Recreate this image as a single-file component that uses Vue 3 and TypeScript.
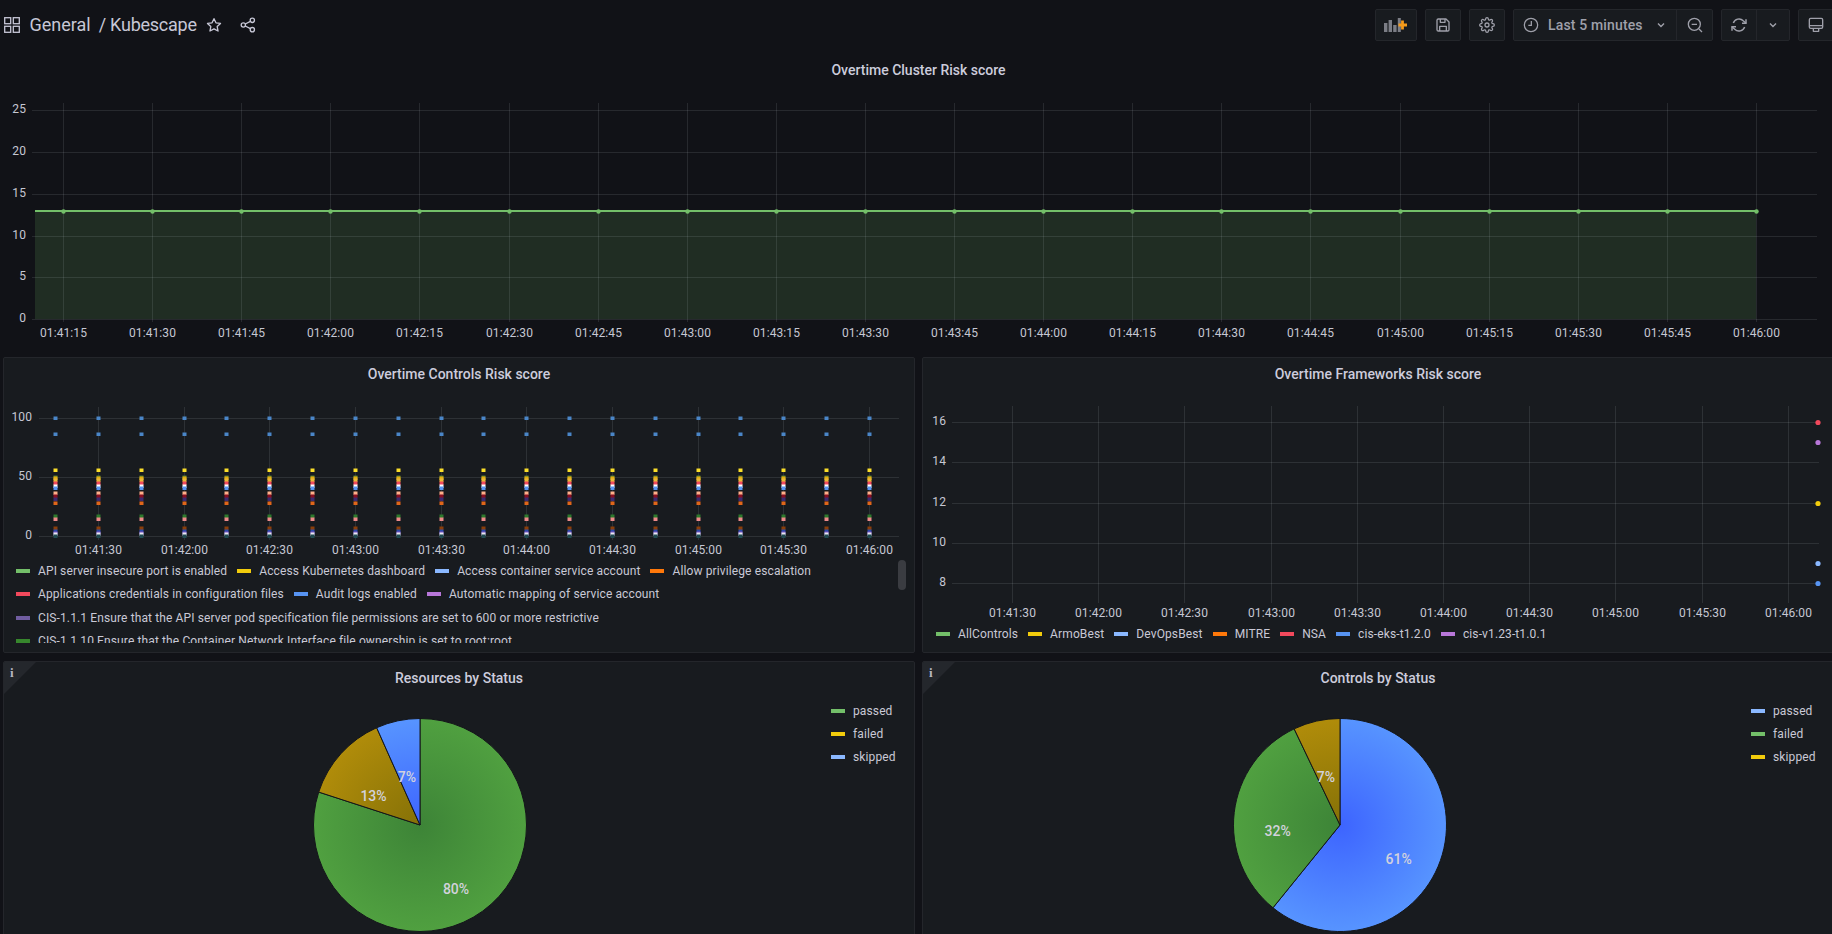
<script setup lang="ts">
interface Swatch { label: string; color: string }
interface Slice { color: string; inner: string; outer: string; from: number; to: number; id: string }

const range = (start: number, step: number, count: number): number[] =>
  Array.from({ length: count }, (_, i) => Math.round(start + step * i) + 0.5)

const clock = (startMin: number, startSec: number, stepSec: number, count: number): string[] =>
  Array.from({ length: count }, (_, i) => {
    const total = startMin * 60 + startSec + stepSec * i
    const m = String(Math.floor(total / 60)).padStart(2, '0')
    const s = String(total % 60).padStart(2, '0')
    return `01:${m}:${s}`
  })

const topX = range(63, 89.1, 20)
const topLabels = clock(41, 15, 15, 20)
const topY = [
  { v: '25', y: 110 }, { v: '20', y: 152 }, { v: '15', y: 194 },
  { v: '10', y: 236 }, { v: '5', y: 277 }, { v: '0', y: 319 }
]

const ctlColumns = range(55, 42.84, 20)
const ctlGridX = ctlColumns.filter((_, i) => i % 2 === 1)
const ctlLabels = clock(41, 30, 30, 10)
const ctlY = [{ v: '100', y: 418 }, { v: '50', y: 477 }, { v: '0', y: 536 }]
const ctlPoints = [
  { y: 418, c: '#4a86c8' }, { y: 434, c: '#4a86c8' }, { y: 470, c: '#fade2a' },
  { y: 477, c: '#4b7a34' }, { y: 478, c: '#e5ac0e' }, { y: 480, c: '#eab839' },
  { y: 483, c: '#f2495c' }, { y: 486, c: '#ffffff' }, { y: 488, c: '#5794f2' },
  { y: 493, c: '#ffb08a' }, { y: 496, c: '#890f22' }, { y: 499, c: '#3b2a70' },
  { y: 503, c: '#e0661a' }, { y: 516, c: '#2d7a2d' }, { y: 519, c: '#ee8a8a' },
  { y: 528, c: '#8a3f0a' }, { y: 531, c: '#2a4aa8' }, { y: 533, c: '#7a4fc0' },
  { y: 534, c: '#e8e8f0' }, { y: 536, c: '#1f4a50' }
]
const ctlLegend: Swatch[] = [
  { label: 'API server insecure port is enabled', color: '#73bf69' },
  { label: 'Access Kubernetes dashboard', color: '#f2cc0c' },
  { label: 'Access container service account', color: '#8ab8ff' },
  { label: 'Allow privilege escalation', color: '#ff780a' },
  { label: 'Applications credentials in configuration files', color: '#f2495c' },
  { label: 'Audit logs enabled', color: '#5794f2' },
  { label: 'Automatic mapping of service account', color: '#b877d9' },
  { label: 'CIS-1.1.1 Ensure that the API server pod specification file permissions are set to 600 or more restrictive', color: '#705da0' },
  { label: 'CIS-1.1.10 Ensure that the Container Network Interface file ownership is set to root:root', color: '#37872d' }
]

const fwX = range(1012, 86.2, 10)
const fwLabels = clock(41, 30, 30, 10)
const fwY = [
  { v: '16', y: 422 }, { v: '14', y: 462 }, { v: '12', y: 503 },
  { v: '10', y: 543 }, { v: '8', y: 583 }
]
const fwPoints = [
  { y: 422, c: '#f2495c' }, { y: 442, c: '#b877d9' }, { y: 503, c: '#f2cc0c' },
  { y: 563, c: '#8ab8ff' }, { y: 583, c: '#5794f2' }
]
const fwLegend: Swatch[] = [
  { label: 'AllControls', color: '#73bf69' },
  { label: 'ArmoBest', color: '#f2cc0c' },
  { label: 'DevOpsBest', color: '#8ab8ff' },
  { label: 'MITRE', color: '#ff780a' },
  { label: 'NSA', color: '#f2495c' },
  { label: 'cis-eks-t1.2.0', color: '#5794f2' },
  { label: 'cis-v1.23-t1.0.1', color: '#b877d9' }
]

const GREEN = { color: '#73bf69', inner: '#3d8437', outer: '#50a040' }
const GOLD = { color: '#f2cc0c', inner: '#857107', outer: '#b08c0a' }
const BLUE = { color: '#8ab8ff', inner: '#3d64ff', outer: '#5794ff' }

const R = 106.5
const sector = (cx: number, cy: number, from: number, to: number): string => {
  const pt = (deg: number): string => {
    const a = (deg * Math.PI) / 180
    return `${(cx + R * Math.sin(a)).toFixed(2)} ${(cy - R * Math.cos(a)).toFixed(2)}`
  }
  const large = to - from > 180 ? 1 : 0
  return `M${cx} ${cy}L${pt(from)}A${R} ${R} 0 ${large} 1 ${pt(to)}Z`
}

const resSlices: Slice[] = [
  { ...GREEN, from: 0, to: 288, id: 'res-a' },
  { ...GOLD, from: 288, to: 336, id: 'res-b' },
  { ...BLUE, from: 336, to: 360, id: 'res-c' }
]
const ctlSlices: Slice[] = [
  { ...BLUE, from: 0, to: 219, id: 'ctl-a' },
  { ...GREEN, from: 219, to: 334.5, id: 'ctl-b' },
  { ...GOLD, from: 334.5, to: 360, id: 'ctl-c' }
]
const resLabels = [
  { t: '80%', x: 456, y: 889 }, { t: '13%', x: 373.5, y: 796 }, { t: '7%', x: 407, y: 777 }
]
const ctlPieLabels = [
  { t: '61%', x: 1398.7, y: 859 }, { t: '32%', x: 1277.7, y: 831 }, { t: '7%', x: 1326, y: 777 }
]
const resLegend: Swatch[] = [
  { label: 'passed', color: '#73bf69' },
  { label: 'failed', color: '#f2cc0c' },
  { label: 'skipped', color: '#8ab8ff' }
]
const ctlPieLegend: Swatch[] = [
  { label: 'passed', color: '#8ab8ff' },
  { label: 'failed', color: '#73bf69' },
  { label: 'skipped', color: '#f2cc0c' }
]
</script>

<template>
  <div class="page">
    <header class="bar">
      <div class="crumbs">
        <svg class="apps" width="16" height="16" viewBox="0 0 16 16" fill="none" stroke="currentColor" stroke-width="1.3">
          <rect x="0.7" y="0.7" width="6" height="6" />
          <rect x="9.3" y="0.7" width="6" height="6" />
          <rect x="0.7" y="9.3" width="6" height="6" />
          <rect x="9.3" y="9.3" width="6" height="6" />
        </svg>
        <span class="crumb">General</span>
        <span class="crumb crumb-last">/ Kubescape</span>
        <svg class="star" width="16" height="16" viewBox="0 0 24 24" fill="none" stroke="currentColor" stroke-width="2" stroke-linejoin="round">
          <path d="M12 2.5l2.95 6.2 6.8.9-4.95 4.7 1.25 6.75L12 17.75 5.95 21.05 7.2 14.3 2.25 9.6l6.8-.9z" />
        </svg>
        <svg class="share" width="16" height="16" viewBox="0 0 24 24" fill="none" stroke="currentColor" stroke-width="2">
          <circle cx="18.5" cy="5" r="3.2" />
          <circle cx="5" cy="12" r="3.2" />
          <circle cx="18.5" cy="19" r="3.2" />
          <path d="M7.9 10.5l7.7-4M7.9 13.5l7.7 4" />
        </svg>
      </div>
      <div class="tools">
        <button class="btn btn-add">
          <svg width="26" height="16" viewBox="0 0 26 16">
            <g fill="#7b7d85">
              <rect x="1" y="6" width="3.4" height="9" />
              <rect x="5.6" y="3" width="3.4" height="12" />
              <rect x="10.2" y="8" width="3.4" height="7" />
              <rect x="14.8" y="1" width="3" height="14" />
            </g>
            <path d="M19.5 3.5v9M15.5 8h8.5" stroke="#f59b1b" stroke-width="2.8" fill="none" />
          </svg>
        </button>
        <button class="btn">
          <svg width="16" height="16" viewBox="0 0 24 24" fill="none" stroke="currentColor" stroke-width="2" stroke-linejoin="round">
            <path d="M5 3h11.5L21 7.5V19a2 2 0 0 1-2 2H5a2 2 0 0 1-2-2V5a2 2 0 0 1 2-2z" />
            <path d="M7 21v-7h10v7M8 3v5h7V3" />
          </svg>
        </button>
        <button class="btn">
          <svg width="16" height="16" viewBox="0 0 24 24" fill="none" stroke="currentColor" stroke-width="1.9">
            <circle cx="12" cy="12" r="3" />
            <path d="M19.4 15a1.65 1.65 0 0 0 .33 1.82l.06.06a2 2 0 0 1 0 2.83 2 2 0 0 1-2.83 0l-.06-.06a1.65 1.65 0 0 0-1.82-.33 1.65 1.65 0 0 0-1 1.51V21a2 2 0 0 1-2 2 2 2 0 0 1-2-2v-.09A1.65 1.65 0 0 0 9 19.4a1.65 1.65 0 0 0-1.82.33l-.06.06a2 2 0 0 1-2.83 0 2 2 0 0 1 0-2.83l.06-.06a1.65 1.65 0 0 0 .33-1.82 1.65 1.65 0 0 0-1.51-1H3a2 2 0 0 1-2-2 2 2 0 0 1 2-2h.09A1.65 1.65 0 0 0 4.6 9a1.65 1.65 0 0 0-.33-1.82l-.06-.06a2 2 0 0 1 0-2.83 2 2 0 0 1 2.83 0l.06.06a1.65 1.65 0 0 0 1.82.33H9a1.65 1.65 0 0 0 1-1.51V3a2 2 0 0 1 2-2 2 2 0 0 1 2 2v.09a1.65 1.65 0 0 0 1 1.51 1.65 1.65 0 0 0 1.82-.33l.06-.06a2 2 0 0 1 2.83 0 2 2 0 0 1 0 2.83l-.06.06a1.65 1.65 0 0 0-.33 1.82V9a1.65 1.65 0 0 0 1.51 1H21a2 2 0 0 1 2 2 2 2 0 0 1-2 2h-.09a1.65 1.65 0 0 0-1.51 1z" />
          </svg>
        </button>
        <div class="group">
          <button class="seg seg-time">
            <svg width="16" height="16" viewBox="0 0 24 24" fill="none" stroke="currentColor" stroke-width="1.9">
              <circle cx="12" cy="12" r="10" />
              <path d="M12.5 6v6.5H8" />
            </svg>
            <span class="time-text">Last 5 minutes</span>
            <svg class="chev" width="12" height="12" viewBox="0 0 12 12" fill="none" stroke="currentColor" stroke-width="1.4">
              <path d="M3 4.5L6 7.5L9 4.5" />
            </svg>
          </button>
          <button class="seg seg-zoom">
            <svg width="16" height="16" viewBox="0 0 24 24" fill="none" stroke="currentColor" stroke-width="2">
              <circle cx="11" cy="11" r="9" />
              <path d="M7 11h8M18 18l4.5 4.5" />
            </svg>
          </button>
        </div>
        <div class="group">
          <button class="seg seg-zoom">
            <svg width="16" height="16" viewBox="0 0 24 24" fill="none" stroke="currentColor" stroke-width="2.2">
              <path d="M22.5 3.5v6h-6M1.5 20.5v-6h6" />
              <path d="M3.51 9a9 9 0 0 1 14.85-3.36L22.5 9.5M1.5 14.5l4.14 3.86A9 9 0 0 0 20.49 15" />
            </svg>
          </button>
          <button class="seg seg-more">
            <svg width="12" height="12" viewBox="0 0 12 12" fill="none" stroke="currentColor" stroke-width="1.4">
              <path d="M3 4.5L6 7.5L9 4.5" />
            </svg>
          </button>
        </div>
        <button class="btn">
          <svg width="16" height="16" viewBox="0 0 24 24" fill="none" stroke="currentColor" stroke-width="2" stroke-linejoin="round">
            <rect x="2" y="2" width="20" height="15" rx="2" />
            <path d="M2 13h20M8 17v4.5h8V17" />
          </svg>
        </button>
      </div>
    </header>

    <main class="dash">
      <section class="panel panel-clear">
        <h2 class="title">Overtime Cluster Risk score</h2>
        <svg class="chart" width="1829" height="261" viewBox="4 87 1829 261">
          <rect x="35" y="211" width="1721" height="108" fill="#73bf69" opacity="0.155" />
          <line v-for="t in topY" :key="t.v" x1="32" :x2="1817" :y1="t.y + 0.5" :y2="t.y + 0.5" class="grid" />
          <line v-for="x in topX" :key="x" :x1="x" :x2="x" y1="103" y2="322" class="grid" />
          <text v-for="t in topY" :key="t.v" x="26" :y="t.y - 1" class="tick" text-anchor="end">{{ t.v }}</text>
          <text v-for="(l, i) in topLabels" :key="l" :x="topX[i]" y="333" class="tick" text-anchor="middle">{{ l }}</text>
          <line x1="35" x2="1756" y1="211" y2="211" stroke="#73bf69" stroke-width="2.2" />
          <circle v-for="x in topX" :key="x" :cx="x" cy="211.5" r="2.2" fill="#73bf69" />
        </svg>
      </section>

      <div class="pair">
        <section class="panel">
          <h2 class="title">Overtime Controls Risk score</h2>
          <svg class="chart" width="910" height="168" viewBox="4 391 910 168">
            <line v-for="t in ctlY" :key="t.v" x1="39" x2="899" :y1="t.y + 0.5" :y2="t.y + 0.5" class="grid" />
            <line v-for="x in ctlGridX" :key="x" :x1="x" :x2="x" y1="407" y2="540" class="grid" />
            <text v-for="t in ctlY" :key="t.v" x="32" :y="t.y - 1" class="tick" text-anchor="end">{{ t.v }}</text>
            <text v-for="(l, i) in ctlLabels" :key="l" :x="ctlGridX[i]" y="550" class="tick" text-anchor="middle">{{ l }}</text>
            <g v-for="x in ctlColumns" :key="x">
              <rect v-for="p in ctlPoints" :key="p.y + p.c" :x="x - 2" :y="p.y - 1.5" width="4" height="3.5" :fill="p.c" />
            </g>
          </svg>
          <div class="legend-scroll">
            <div v-for="s in ctlLegend" :key="s.label" class="legend-item legend-item-tall">
              <i class="swatch" :style="{ background: s.color }"></i>
              <span>{{ s.label }}</span>
            </div>
            <div class="thumb"></div>
          </div>
        </section>

        <section class="panel">
          <h2 class="title">Overtime Frameworks Risk score</h2>
          <svg class="chart" width="910" height="231" viewBox="923 391 910 231">
            <line v-for="t in fwY" :key="t.v" x1="952" x2="1819" :y1="t.y + 0.5" :y2="t.y + 0.5" class="grid" />
            <line v-for="x in fwX" :key="x" :x1="x" :x2="x" y1="406" y2="603" class="grid" />
            <text v-for="t in fwY" :key="t.v" x="946" :y="t.y - 1" class="tick" text-anchor="end">{{ t.v }}</text>
            <text v-for="(l, i) in fwLabels" :key="l" :x="fwX[i]" y="613" class="tick" text-anchor="middle">{{ l }}</text>
            <circle v-for="p in fwPoints" :key="p.y" cx="1818" :cy="p.y + 0.5" r="2.6" :fill="p.c" />
          </svg>
          <div class="legend-line">
            <div v-for="s in fwLegend" :key="s.label" class="legend-item">
              <i class="swatch" :style="{ background: s.color }"></i>
              <span>{{ s.label }}</span>
            </div>
          </div>
        </section>
      </div>

      <div class="pair">
        <section class="panel">
          <div class="corner"><span class="corner-i">i</span></div>
          <h2 class="title">Resources by Status</h2>
          <div class="pie-body">
            <svg class="chart" width="827" height="262" viewBox="4 695 827 262">
              <defs>
                <radialGradient v-for="s in resSlices" :id="s.id" :key="s.id" gradientUnits="userSpaceOnUse" cx="420" cy="825" :r="R">
                  <stop offset="0" :stop-color="s.inner" />
                  <stop offset="1" :stop-color="s.outer" />
                </radialGradient>
              </defs>
              <path v-for="s in resSlices" :key="s.id" :d="sector(420, 825, s.from, s.to)" :fill="`url(#${s.id})`" class="slice" />
              <text v-for="l in resLabels" :key="l.t" :x="l.x" :y="l.y" class="pie-label" text-anchor="middle">{{ l.t }}</text>
            </svg>
            <div class="pie-legend">
              <div v-for="s in resLegend" :key="s.label" class="legend-item pie-row">
                <i class="swatch" :style="{ background: s.color }"></i>
                <span>{{ s.label }}</span>
              </div>
            </div>
          </div>
        </section>

        <section class="panel">
          <div class="corner"><span class="corner-i">i</span></div>
          <h2 class="title">Controls by Status</h2>
          <div class="pie-body">
            <svg class="chart" width="828" height="262" viewBox="923 695 828 262">
              <defs>
                <radialGradient v-for="s in ctlSlices" :id="s.id" :key="s.id" gradientUnits="userSpaceOnUse" cx="1340" cy="825" :r="R">
                  <stop offset="0" :stop-color="s.inner" />
                  <stop offset="1" :stop-color="s.outer" />
                </radialGradient>
              </defs>
              <path v-for="s in ctlSlices" :key="s.id" :d="sector(1340, 825, s.from, s.to)" :fill="`url(#${s.id})`" class="slice" />
              <text v-for="l in ctlPieLabels" :key="l.t" :x="l.x" :y="l.y" class="pie-label" text-anchor="middle">{{ l.t }}</text>
            </svg>
            <div class="pie-legend">
              <div v-for="s in ctlPieLegend" :key="s.label" class="legend-item pie-row">
                <i class="swatch" :style="{ background: s.color }"></i>
                <span>{{ s.label }}</span>
              </div>
            </div>
          </div>
        </section>
      </div>
    </main>
  </div>
</template>

<style>
html, body {
  height: 100%;
  margin: 0;
  overflow: hidden;
  background: #111217;
}
</style>

<style scoped>
.page {
  width: 1834px;
  height: 934px;
  overflow: hidden;
  background: #111217;
  color: #ccccdc;
  font-family: Roboto, "Liberation Sans", sans-serif;
  font-size: 12px;
}
.bar {
  display: flex;
  align-items: center;
  justify-content: space-between;
  height: 50px;
  box-sizing: border-box;
  padding: 0 0 0 4px;
}
.crumbs {
  display: flex;
  align-items: center;
  color: #c7c7d6;
}
.crumb {
  font-size: 18px;
  line-height: 24px;
}
.apps { margin-right: 9.5px; }
.crumb-last {
  margin-left: 8px;
  letter-spacing: -0.25px;
}
.star { margin-left: 9px; }
.share { margin-left: 18px; }
.tools {
  display: flex;
  align-items: center;
  gap: 8px;
}
.btn,
.group {
  height: 32px;
  box-sizing: border-box;
  background: #181b1f;
  border: 1px solid #24262b;
  border-radius: 2px;
  color: #9fa0aa;
  padding: 0;
}
.btn {
  width: 36px;
  display: flex;
  align-items: center;
  justify-content: center;
}
.btn-add { width: 42px; }
.group { display: flex; }
.seg {
  display: flex;
  align-items: center;
  background: none;
  border: 0;
  color: inherit;
  height: 30px;
  padding: 0;
  font: inherit;
}
.seg-time {
  width: 163px;
  padding-left: 9px;
  border-right: 1px solid #24262b;
}
.time-text {
  margin-left: 9px;
  font-size: 14px;
  font-weight: 500;
  letter-spacing: 0.15px;
  white-space: nowrap;
}
.chev { margin-left: 12px; }
.seg-zoom {
  width: 35px;
  justify-content: center;
}
.group > .seg-zoom:first-child {
  border-right: 1px solid #24262b;
}
.seg-more {
  width: 32px;
  justify-content: center;
}
.dash {
  display: flex;
  flex-direction: column;
  gap: 8px;
  padding: 3px 0 0 3px;
}
.panel {
  position: relative;
  height: 296px;
  box-sizing: border-box;
  background: #181b1f;
  border: 1px solid #24262b;
  border-radius: 2px;
  overflow: hidden;
}
.panel-clear {
  background: transparent;
  border-color: transparent;
}
.pair {
  display: grid;
  grid-template-columns: 912px 912px;
  gap: 7px;
}
.title {
  margin: 0;
  height: 33px;
  line-height: 32px;
  text-align: center;
  font-size: 14px;
  font-weight: 500;
  color: #ccccdc;
  white-space: nowrap;
}
.chart { display: block; }
.grid {
  stroke: rgba(240, 250, 255, 0.1);
  stroke-width: 1;
}
.tick {
  fill: #c6c7d3;
  font-size: 12px;
  letter-spacing: 0.09px;
  dominant-baseline: central;
}
.slice {
  stroke: #14161a;
  stroke-width: 1;
}
.pie-label {
  fill: #d2d2dc;
  font-size: 14px;
  font-weight: 500;
  dominant-baseline: central;
}
.legend-scroll {
  position: relative;
  height: 84px;
  overflow: hidden;
  display: flex;
  flex-wrap: wrap;
  align-content: flex-start;
  column-gap: 10px;
  padding-left: 12px;
}
.thumb {
  position: absolute;
  left: 894px;
  top: 1px;
  width: 8px;
  height: 30px;
  border-radius: 4px;
  background: #3a3c41;
}
.legend-line {
  display: flex;
  align-items: center;
  gap: 10px;
  height: 24px;
  padding-left: 13px;
}
.legend-item {
  display: flex;
  align-items: center;
  color: #c9c9d6;
  white-space: nowrap;
  letter-spacing: 0.12px;
}
.legend-item-tall { height: 23.5px; }
.swatch {
  width: 14px;
  height: 4px;
  margin-right: 8px;
  flex: none;
}
.pie-body { display: flex; }
.pie-legend {
  padding-top: 4.5px;
  flex: 1;
}
.pie-row { height: 23px; }
.corner {
  position: absolute;
  left: 0;
  top: 0;
  width: 0;
  height: 0;
  border-style: solid;
  border-width: 32px 32px 0 0;
  border-color: #24272c transparent transparent transparent;
}
.corner-i {
  position: absolute;
  left: 6px;
  top: -27px;
  font-family: "Liberation Serif", serif;
  font-weight: 700;
  font-size: 13px;
  line-height: 12px;
  color: #b6b7c2;
}
</style>
